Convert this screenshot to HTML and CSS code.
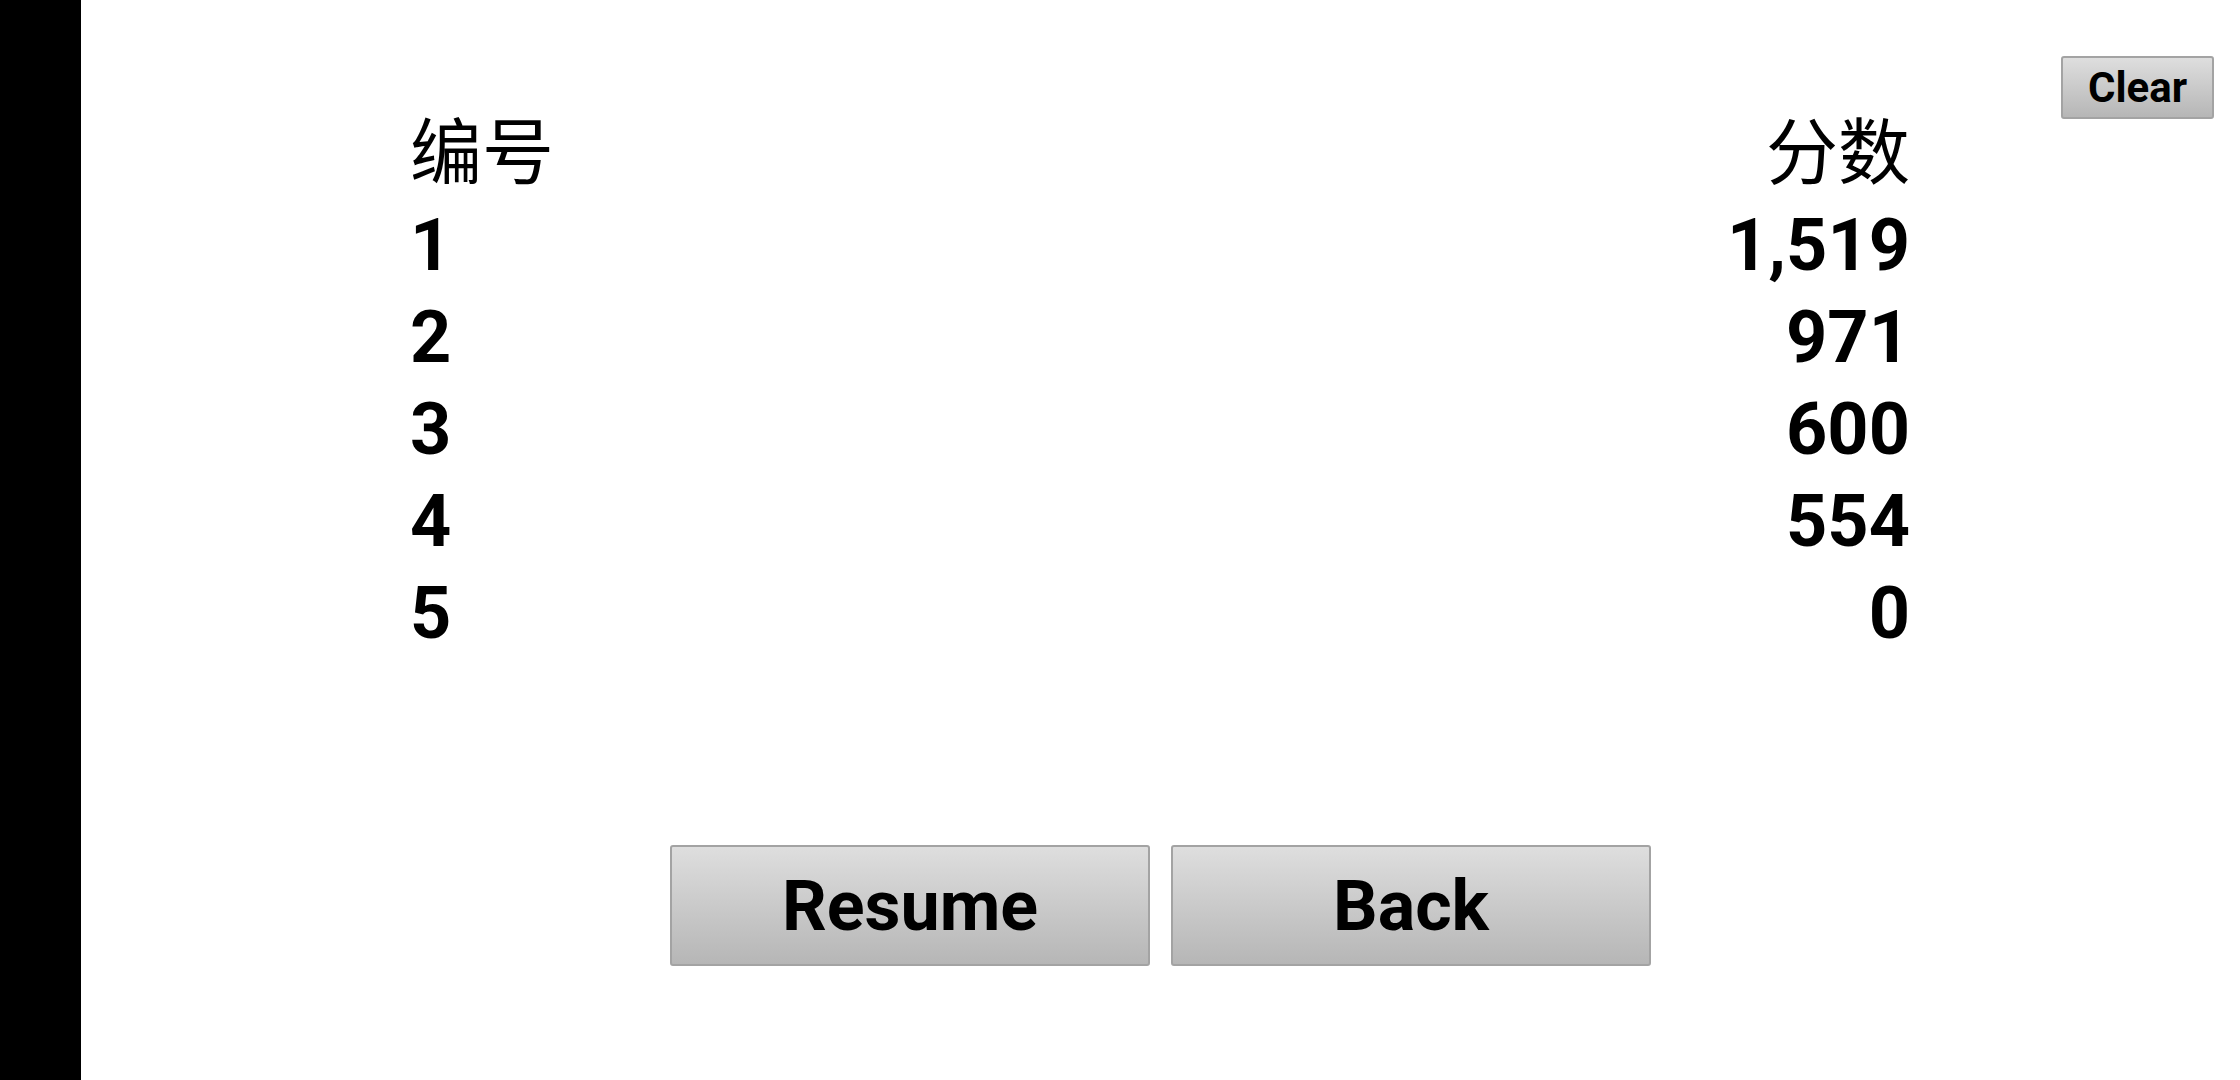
FILE: index.html
```html
<!DOCTYPE html>
<html lang="zh">
  <head>
    <meta charset="UTF-8" />
    <meta name="viewport" content="width=device-width, initial-scale=1.0" />
    <title>High Scores</title>
    <link rel="stylesheet" href="styles.css">
  </head>
  <body>
    <div class="screen">
      <!-- Left system bar -->
      <div class="side-bar"></div>

      <div class="main">
        <button class="btn clear-btn">Clear</button>

        <!-- Score table -->
        <div class="score-table">
          <div class="score-row head">
            <span>编号</span>
            <span>分数</span>
          </div>
          <div class="score-row"><span>1</span><span>1,519</span></div>
          <div class="score-row"><span>2</span><span>971</span></div>
          <div class="score-row"><span>3</span><span>600</span></div>
          <div class="score-row"><span>4</span><span>554</span></div>
          <div class="score-row"><span>5</span><span>0</span></div>
        </div>

        <!-- Bottom actions -->
        <div class="actions">
          <button class="btn big-btn">Resume</button>
          <button class="btn big-btn">Back</button>
        </div>
      </div>
    </div>
  </body>
</html>
```

FILE: styles.css
```css
body {
  margin: 0;
  padding: 0;
  background: white;
  font-family: "Roboto", "Noto Sans CJK SC", sans-serif;
  color: black;
}

.screen {
  display: flex;
  width: 100%;
  height: 100vh;
}

.side-bar {
  width: 81px;
  flex-shrink: 0;
  background: black;
}

.main {
  position: relative;
  flex: 1;
  display: flex;
  flex-direction: column;
  align-items: center;
  padding-top: 108px;
}

.btn {
  font-family: "Roboto", sans-serif;
  font-weight: bold;
  color: black;
  background: linear-gradient(to bottom, #dedede, #b6b6b6);
  border: 2px solid #a3a3a3;
  border-radius: 3px;
  padding: 0;
  cursor: pointer;
}

/* sits over the top right corner */
.clear-btn {
  position: absolute;
  top: 56px;
  right: 26px;
  width: 153px;
  height: 63px;
  font-size: 42px;
}

.score-table {
  width: 1500px;
  margin-right: 1px;
}

.score-row {
  display: flex;
  justify-content: space-between;
  font-size: 72px;
  line-height: 92px;
  font-weight: bold;
}

.score-row.head {
  font-weight: normal;
}

.actions {
  display: flex;
  gap: 21px;
  margin-top: 185px;
}

.big-btn {
  width: 480px;
  height: 121px;
  font-size: 70px;
}
```
